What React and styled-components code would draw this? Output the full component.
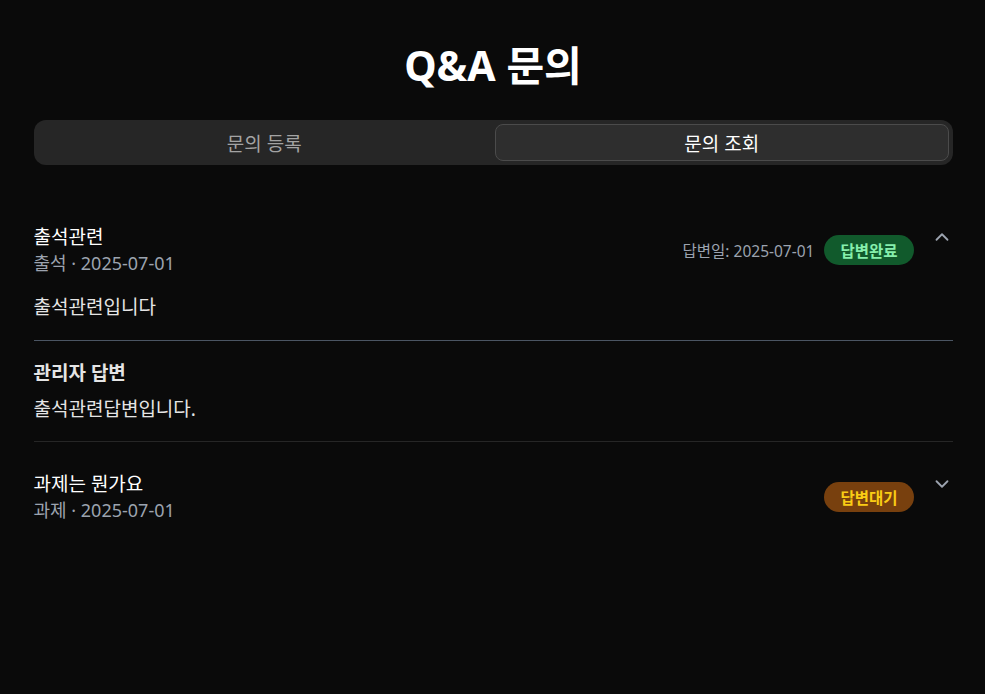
import React, { useState } from 'react';
import styled, { createGlobalStyle } from 'styled-components';
import { ChevronUp, ChevronDown } from 'lucide-react';

const GlobalStyle = createGlobalStyle`
  html, body {
    margin: 0;
    padding: 0;
    background: #0a0a0a;
  }
  body {
    font-family: "Noto Sans", "Noto Sans CJK KR", sans-serif;
    color: #ffffff;
  }
  * {
    box-sizing: border-box;
  }
`;

const Page = styled.div`
  min-height: 100vh;
  background: #0a0a0a;
  padding: 40px 0 40px;
`;

const Container = styled.div`
  max-width: 920px;
  margin: 0 auto;
  padding-left: 1px;
`;

const Title = styled.h1`
  margin: 0 0 30px;
  text-align: center;
  font-size: 41px;
  line-height: 50px;
  font-weight: 700;
  color: #ffffff;
`;

const Tabs = styled.div`
  display: grid;
  grid-template-columns: 1fr 1fr;
  gap: 4px;
  padding: 4px;
  height: 45px;
  background: #262626;
  border-radius: 12px;
`;

const Tab = styled.button`
  border: 1px solid ${({ $active }) => ($active ? '#4b4b4b' : 'transparent')};
  background: ${({ $active }) => ($active ? '#2e2e2e' : 'transparent')};
  color: ${({ $active }) => ($active ? '#ffffff' : '#a3a3a3')};
  border-radius: 8px;
  font-family: inherit;
  font-size: 19px;
  cursor: pointer;
`;

const List = styled.div`
  margin-top: 30px;
`;

const Item = styled.div`
  padding: 29px 0 18px;
  border-bottom: 1px solid #262626;

  &:last-child {
    border-bottom: none;
  }
`;

const Header = styled.div`
  display: flex;
  align-items: center;
`;

const Left = styled.div`
  flex: 1;
  display: flex;
  flex-direction: column;
`;

const ItemTitle = styled.div`
  font-size: 19px;
  line-height: 26px;
  color: #ffffff;
`;

const Meta = styled.div`
  font-size: 18px;
  line-height: 26px;
  color: #9ca3af;
`;

const Right = styled.div`
  display: flex;
  align-items: center;
  gap: 10px;
`;

const AnswerDate = styled.span`
  font-size: 15.5px;
  color: #9ca3af;
`;

const Badge = styled.span`
  display: inline-flex;
  align-items: center;
  height: 30px;
  padding: 0 16px;
  border-radius: 999px;
  font-size: 15.5px;
  font-weight: 700;
  background: ${({ $done }) => ($done ? '#115a2c' : '#78400e')};
  color: ${({ $done }) => ($done ? '#86efac' : '#facc15')};
`;

const Toggle = styled.button`
  align-self: flex-start;
  display: flex;
  align-items: center;
  justify-content: center;
  width: 22px;
  height: 26px;
  margin-left: 17px;
  padding: 0;
  border: none;
  background: none;
  color: #9ca3af;
  cursor: pointer;
`;

const Content = styled.p`
  margin: 17px 0 0;
  font-size: 19px;
  line-height: 28px;
  color: #e5e5e5;
`;

const Divider = styled.hr`
  margin: 19px 0 18px;
  border: none;
  border-top: 1px solid #4b5563;
`;

const AnswerLabel = styled.div`
  font-size: 19px;
  line-height: 28px;
  font-weight: 700;
  color: #e5e5e5;
`;

const AnswerText = styled.p`
  margin: 8px 0 0;
  font-size: 19px;
  line-height: 28px;
  color: #e5e5e5;
`;

const questions = [
  {
    id: 1,
    title: '출석관련',
    category: '출석',
    date: '2025-07-01',
    content: '출석관련입니다',
    answer: '출석관련답변입니다.',
    answerDate: '2025-07-01',
  },
  {
    id: 2,
    title: '과제는 뭔가요',
    category: '과제',
    date: '2025-07-01',
    content: '',
    answer: null,
  },
];

const QuestionItem = ({ q, open, onToggle }) => (
  <Item>
    <Header>
      <Left>
        <ItemTitle>{q.title}</ItemTitle>
        <Meta>{q.category} · {q.date}</Meta>
      </Left>
      <Right>
        {q.answer && <AnswerDate>답변일: {q.answerDate}</AnswerDate>}
        <Badge $done={!!q.answer}>{q.answer ? '답변완료' : '답변대기'}</Badge>
      </Right>
      <Toggle onClick={onToggle}>
        {open ? <ChevronUp size={24} strokeWidth={2} /> : <ChevronDown size={24} strokeWidth={2} />}
      </Toggle>
    </Header>
    {open && (
      <>
        <Content>{q.content}</Content>
        {q.answer && (
          <>
            <Divider />
            <AnswerLabel>관리자 답변</AnswerLabel>
            <AnswerText>{q.answer}</AnswerText>
          </>
        )}
      </>
    )}
  </Item>
);

export default function App() {
  const [tab, setTab] = useState('list');
  const [openId, setOpenId] = useState(1);

  return (
    <Page>
      <GlobalStyle />
      <Container>
        <Title>Q&amp;A 문의</Title>
        <Tabs>
          <Tab $active={tab === 'write'} onClick={() => setTab('write')}>문의 등록</Tab>
          <Tab $active={tab === 'list'} onClick={() => setTab('list')}>문의 조회</Tab>
        </Tabs>
        <List>
          {questions.map((q) => (
            <QuestionItem
              key={q.id}
              q={q}
              open={openId === q.id}
              onToggle={() => setOpenId(openId === q.id ? null : q.id)}
            />
          ))}
        </List>
      </Container>
    </Page>
  );
}
